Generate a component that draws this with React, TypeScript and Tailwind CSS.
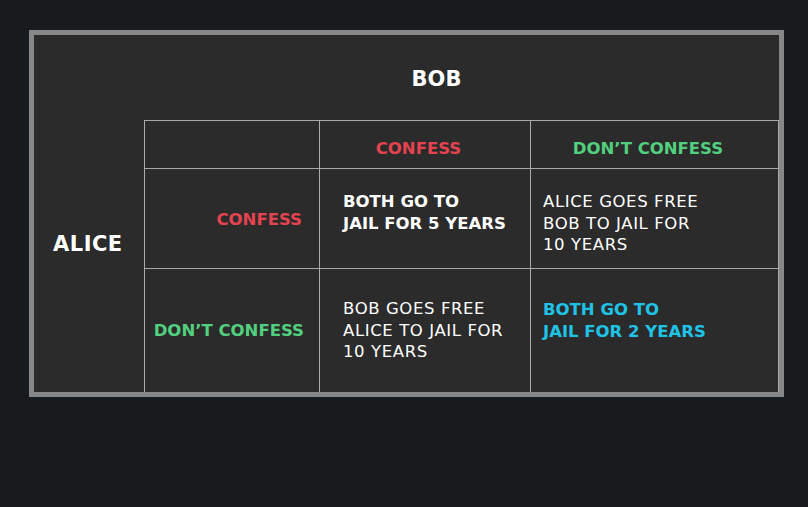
const font = { fontFamily: '"DejaVu Sans", "Liberation Sans", sans-serif' };

const line = "border-[#a9a9a9]";

const App = () => {
  return (
    <div className="min-h-[507px] w-[808px] bg-[#181b1e] pt-[30px] pl-[29px]" style={font}>
      <div className="w-[755px] h-[367px] border-[5px] border-[#878787] bg-[#2b2b2b] flex flex-col">
        {/* Bob header */}
        <div className="h-[85px] pl-[60px] flex items-center justify-center pt-[2px]">
          <span className="text-[21px] leading-[24px] font-bold text-white">BOB</span>
        </div>

        <div className="flex">
          {/* Alice label */}
          <div className="w-[110px] pl-[19px] pt-[112px]">
            <span className="text-[21px] leading-[24px] font-bold text-white tracking-[0.5px]">ALICE</span>
          </div>

          {/* Payoff grid */}
          <div className="w-[635px] grid grid-cols-[175px_211px_249px] grid-rows-[48px_100px_124px] text-[16.5px] leading-[21.5px]">
            <div className={`border-l border-t ${line}`} />
            <div className={`border-l border-t ${line} flex items-center justify-center pr-[13px] pt-[8px] font-bold text-[#e4434f]`}>
              CONFESS
            </div>
            <div className={`border-l border-t border-r ${line} flex items-center justify-center pr-[13px] pt-[8px] font-bold text-[#52d07f]`}>
              DON&#8217;T CONFESS
            </div>

            <div className={`border-l border-t ${line} flex items-center justify-end pr-[17px] pt-[2px] font-bold text-[#e4434f]`}>
              CONFESS
            </div>
            <div className={`border-l border-t ${line} pl-[23px] pt-[22px] font-bold text-white`}>
              BOTH GO TO
              <br />
              JAIL FOR 5 YEARS
            </div>
            <div className={`border-l border-t border-r ${line} pl-[12px] pt-[22px] text-white tracking-[0.6px]`}>
              ALICE GOES FREE
              <br />
              BOB TO JAIL FOR
              <br />
              10 YEARS
            </div>

            <div className={`border-l border-t ${line} flex items-center justify-end pr-[15px] font-bold text-[#52d07f]`}>
              DON&#8217;T CONFESS
            </div>
            <div className={`border-l border-t ${line} pl-[23px] pt-[29px] text-white tracking-[0.6px]`}>
              BOB GOES FREE
              <br />
              ALICE TO JAIL FOR
              <br />
              10 YEARS
            </div>
            <div className={`border-l border-t border-r ${line} pl-[12px] pt-[30px] font-bold text-[#1fc3e6]`}>
              BOTH GO TO
              <br />
              JAIL FOR 2 YEARS
            </div>
          </div>
        </div>
      </div>
    </div>
  );
};

export default App;
